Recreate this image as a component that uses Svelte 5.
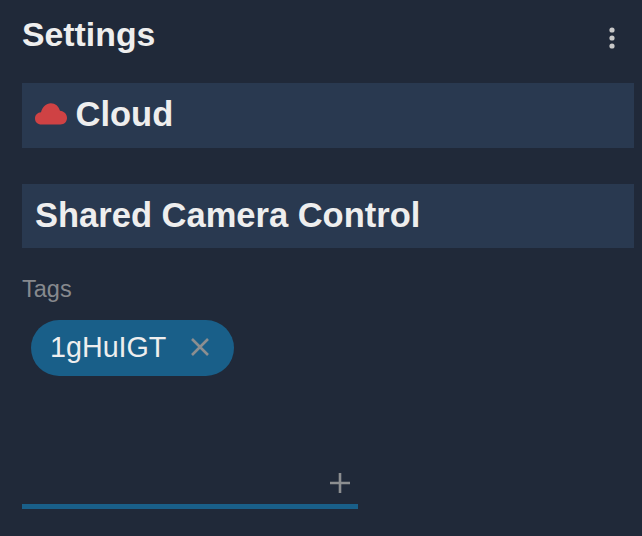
<script>
  let tags = ['1gHuIGT'];
</script>

<div class="panel">
  <header class="top">
    <h1>Settings</h1>
    <button class="more" aria-label="More">
      <svg width="6" height="22" viewBox="0 0 6 22"><circle cx="3" cy="3" r="2.6"/><circle cx="3" cy="11" r="2.6"/><circle cx="3" cy="19" r="2.6"/></svg>
    </button>
  </header>

  <section class="bar cloud">
    <svg class="cloud-icon" width="32" height="22" viewBox="0 0 32 22"><path d="M6.500 21.500C2.500 21.500 0 19 0 15.500 0 12.200 2.500 9.500 6 9.300 7.500 3.800 11.200 .3 15.800 .3c4.500 0 8 3 9.200 7.500 4 .3 7 3.300 7 7.200 0 3.700-2.800 6.500-6.500 6.500Z"/></svg>
    <span>Cloud</span>
  </section>

  <section class="bar shared"><span>Shared Camera Control</span></section>

  <div class="label">Tags</div>
  <div class="tags">
    {#each tags as t}
      <span class="chip">
        <span>{t}</span>
        <svg width="18" height="18" viewBox="0 0 18 18"><path d="M1 1 17 17M17 1 1 17"/></svg>
      </span>
    {/each}
  </div>

  <div class="add">
    <svg width="20" height="20" viewBox="0 0 20 20"><path d="M10 0V20M0 10H20"/></svg>
  </div>
</div>

<style>
  :global(body) {
    margin: 0;
    background: #202939;
  }
  .panel {
    box-sizing: border-box;
    width: 642px;
    height: 536px;
    padding: 0 8px 0 22px;
    background: #202939;
    font-family: "Liberation Sans", Arial, sans-serif;
    color: #eeeeee;
    overflow: hidden;
  }
  .top {
    display: flex;
    justify-content: space-between;
    height: 83px;
  }
  h1 {
    margin: 0;
    padding-top: 14px;
    font-size: 33.800px;
    line-height: 40px;
    font-weight: 700;
  }
  .more {
    border: 0;
    background: none;
    padding: 27px 19px 0 0;
    height: 52px;
    display: flex;
  }
  .more svg {
    fill: #c9c9c9;
  }
  .bar {
    display: flex;
    align-items: center;
    background: #293950;
    padding-left: 13px;
    font-weight: 700;
    font-size: 34.5px;
  }
  .bar span {
    position: relative;
    top: -1px;
  }
  .cloud {
    height: 65px;
    gap: 9px;
    padding-left: 12.500px;
  }
  .cloud-icon {
    fill: #cf4244;
    margin-bottom: 3px;
  }
  .shared {
    height: 64px;
    margin-top: 36px;
  }
  .label {
    margin-top: 27px;
    font-size: 23.500px;
    line-height: 28px;
    color: #87898e;
  }
  .tags {
    display: flex;
    padding: 17px 0 0 9px;
  }
  .chip {
    box-sizing: border-box;
    display: flex;
    align-items: center;
    gap: 24px;
    height: 56px;
    padding: 0 25px 2px 19px;
    border-radius: 28px;
    background: #195f89;
    font-size: 28.700px;
  }
  .chip svg {
    margin-left: 1px;
  }
  .chip svg path, .add svg path {
    stroke: #8c8e90;
    stroke-width: 2.6;
    fill: none;
  }
  .add {
    box-sizing: border-box;
    width: 336px;
    margin-top: 97px;
    height: 36px;
    padding-right: 8px;
    display: flex;
    justify-content: flex-end;
    border-bottom: 5px solid #195f89;
  }
</style>
